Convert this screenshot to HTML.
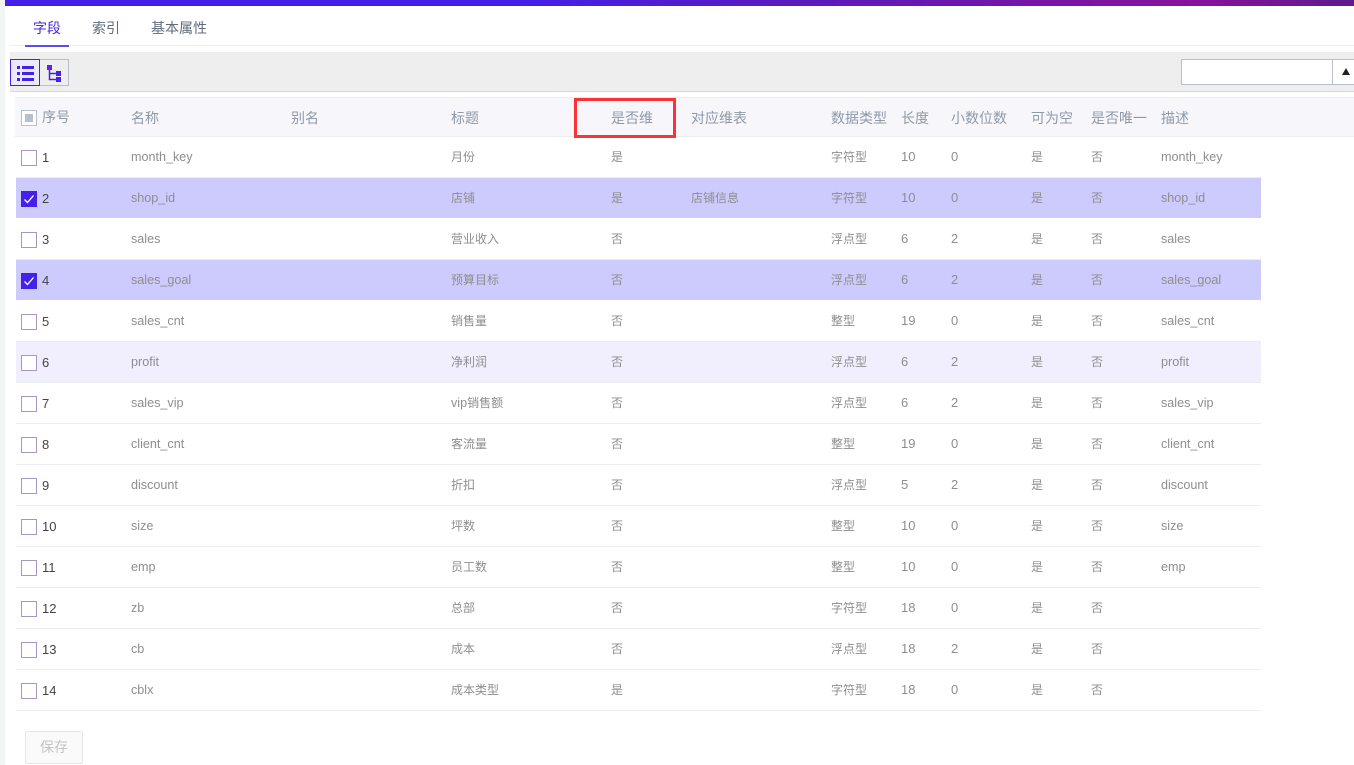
<!DOCTYPE html>
<html><head><meta charset="utf-8">
<style>
html,body{margin:0;padding:0;background:#fff;}
body{width:1354px;height:765px;position:relative;overflow:hidden;font-family:"Liberation Sans","Noto Sans CJK SC",sans-serif;font-size:14px;color:#8e8e8e;}
.abs{position:absolute;}
.row{position:absolute;left:16px;width:1245px;height:40px;border-bottom:1px solid #ebebf3;}
.row.s{background:#cdcbfd;border-bottom-color:#fff;}
.row.h{background:#f1effd;}
.row span{position:absolute;top:0;line-height:40px;white-space:nowrap;font-size:12px;}
.row .n{left:26px;top:1px;color:#444;font-size:13px;}
.c1{left:115px}.c2{left:275px}.c3{left:435px}.c4{left:595px}.c5{left:675px}.c6{left:815px}.c7{left:885px}.c8{left:935px}.c9{left:1015px}.c10{left:1075px}.c11{left:1145px}
.row .c1,.row .c11{font-size:12.6px;top:0;}
.row .c7,.row .c8{font-size:13px;top:0;}
b{font-weight:normal;font-size:12.6px;}
.row i{position:absolute;left:5px;top:13px;width:14px;height:14px;border:1px solid #a897c4;background:#fff;}
.row.s i{border-color:#4420e8;background:#4420e8;}
.row.s i svg{position:absolute;left:0;top:0;}
.hd span{position:absolute;top:97px;line-height:40px;color:#8f99a8;white-space:nowrap;}
.tab{position:absolute;top:18px;line-height:20px;font-size:14px;color:#5f6b7a;}
</style></head><body>
<div class="abs" style="left:0;top:0;width:5px;height:765px;background:#f3f5f5;"></div>
<div class="abs" style="left:5px;top:0;width:1349px;height:6px;background:linear-gradient(90deg,#4420e8 0%,#4420e8 38%,#5f1ab8 62%,#87129c 88%,#5e1a8c 100%);"></div>

<div class="tab" style="left:33px;color:#4a25e8;">字段</div>
<div class="tab" style="left:92px;">索引</div>
<div class="tab" style="left:151px;">基本属性</div>
<div class="abs" style="left:10px;top:45px;width:1344px;height:1px;background:#eeeeee;"></div>
<div class="abs" style="left:25px;top:45px;width:44px;height:2px;background:#5c4df0;"></div>

<div class="abs" style="left:10px;top:52px;width:1344px;height:39px;background:#eeeeee;border-bottom:1px solid #d8d8d8;"></div>
<div class="abs" style="left:10px;top:59px;width:28px;height:25px;border:1px solid #4420e8;background:#ece9fd;">
<svg width="28" height="25" style="display:block"><g fill="#4420e8"><rect x="6" y="6" width="3" height="3"/><rect x="11" y="6" width="12" height="3"/><rect x="6" y="12" width="3" height="3"/><rect x="11" y="12" width="12" height="3"/><rect x="6" y="18" width="3" height="3"/><rect x="11" y="18" width="12" height="3"/></g></svg>
</div>
<div class="abs" style="left:40px;top:59px;width:28px;height:25px;border:1px solid #b8bfcc;border-left:0;">
<svg width="28" height="25" style="display:block"><g fill="#4420e8"><rect x="7" y="5" width="5" height="5" fill="#6a1ee8"/><rect x="16" y="11" width="5" height="5"/><rect x="16" y="17" width="5" height="5"/></g><path d="M9.5 10V19.5H16M9.5 13.5H16" fill="none" stroke="#4420e8" stroke-width="1.5"/></svg>
</div>
<div class="abs" style="left:1181px;top:59px;width:150px;height:24px;border:1px solid #b8bfcc;background:#fff;"></div>
<div class="abs" style="left:1333px;top:59px;width:21px;height:24px;border-top:1px solid #b8bfcc;border-bottom:1px solid #b8bfcc;background:#fff;"></div>
<div class="abs" style="left:1342px;top:68px;width:0;height:0;border-left:4px solid transparent;border-right:4px solid transparent;border-bottom:7px solid #222;"></div>

<div class="abs" style="left:15px;top:97px;width:1339px;height:38px;background:#f7f7fb;border-top:1px solid #ecedf3;border-bottom:1px solid #ecedf3;"></div>
<div class="abs" style="left:21px;top:110px;width:14px;height:14px;border:1px solid #b8c0cc;background:#fff;"></div>
<div class="abs" style="left:25px;top:114px;width:8px;height:8px;background:#b8c0cc;"></div>
<div class="hd">
<span style="left:42px;top:97px;">序号</span><span style="left:131px;top:98px;">名称</span><span style="left:291px;top:98px;">别名</span><span style="left:451px;top:98px;">标题</span><span style="left:611px;top:98px;">是否维</span><span style="left:691px;top:98px;">对应维表</span><span style="left:831px;top:98px;">数据类型</span><span style="left:901px;top:98px;">长度</span><span style="left:951px;top:98px;">小数位数</span><span style="left:1031px;top:98px;">可为空</span><span style="left:1091px;top:98px;">是否唯一</span><span style="left:1161px;top:98px;">描述</span>
</div>
<div class="abs" style="left:574px;top:98px;width:96px;height:34px;border:3px solid #fb3237;"></div>

<div class="row" style="top:137px;"><i></i><span class="n">1</span><span class="c1">month_key</span><span class="c3">月份</span><span class="c4">是</span><span class="c6">字符型</span><span class="c7">10</span><span class="c8">0</span><span class="c9">是</span><span class="c10">否</span><span class="c11">month_key</span></div>
<div class="row s" style="top:178px;"><i><svg width="14" height="14"><path d="M2.5 7.5L5.5 10.5L11.5 3.5" fill="none" stroke="#fff" stroke-width="1.3"/></svg></i><span class="n">2</span><span class="c1">shop_id</span><span class="c3">店铺</span><span class="c4">是</span><span class="c5">店铺信息</span><span class="c6">字符型</span><span class="c7">10</span><span class="c8">0</span><span class="c9">是</span><span class="c10">否</span><span class="c11">shop_id</span></div>
<div class="row" style="top:219px;"><i></i><span class="n">3</span><span class="c1">sales</span><span class="c3">营业收入</span><span class="c4">否</span><span class="c6">浮点型</span><span class="c7">6</span><span class="c8">2</span><span class="c9">是</span><span class="c10">否</span><span class="c11">sales</span></div>
<div class="row s" style="top:260px;"><i><svg width="14" height="14"><path d="M2.5 7.5L5.5 10.5L11.5 3.5" fill="none" stroke="#fff" stroke-width="1.3"/></svg></i><span class="n">4</span><span class="c1">sales_goal</span><span class="c3">预算目标</span><span class="c4">否</span><span class="c6">浮点型</span><span class="c7">6</span><span class="c8">2</span><span class="c9">是</span><span class="c10">否</span><span class="c11">sales_goal</span></div>
<div class="row" style="top:301px;"><i></i><span class="n">5</span><span class="c1">sales_cnt</span><span class="c3">销售量</span><span class="c4">否</span><span class="c6">整型</span><span class="c7">19</span><span class="c8">0</span><span class="c9">是</span><span class="c10">否</span><span class="c11">sales_cnt</span></div>
<div class="row h" style="top:342px;"><i></i><span class="n">6</span><span class="c1">profit</span><span class="c3">净利润</span><span class="c4">否</span><span class="c6">浮点型</span><span class="c7">6</span><span class="c8">2</span><span class="c9">是</span><span class="c10">否</span><span class="c11">profit</span></div>
<div class="row" style="top:383px;"><i></i><span class="n">7</span><span class="c1">sales_vip</span><span class="c3"><b>vip</b>销售额</span><span class="c4">否</span><span class="c6">浮点型</span><span class="c7">6</span><span class="c8">2</span><span class="c9">是</span><span class="c10">否</span><span class="c11">sales_vip</span></div>
<div class="row" style="top:424px;"><i></i><span class="n">8</span><span class="c1">client_cnt</span><span class="c3">客流量</span><span class="c4">否</span><span class="c6">整型</span><span class="c7">19</span><span class="c8">0</span><span class="c9">是</span><span class="c10">否</span><span class="c11">client_cnt</span></div>
<div class="row" style="top:465px;"><i></i><span class="n">9</span><span class="c1">discount</span><span class="c3">折扣</span><span class="c4">否</span><span class="c6">浮点型</span><span class="c7">5</span><span class="c8">2</span><span class="c9">是</span><span class="c10">否</span><span class="c11">discount</span></div>
<div class="row" style="top:506px;"><i></i><span class="n">10</span><span class="c1">size</span><span class="c3">坪数</span><span class="c4">否</span><span class="c6">整型</span><span class="c7">10</span><span class="c8">0</span><span class="c9">是</span><span class="c10">否</span><span class="c11">size</span></div>
<div class="row" style="top:547px;"><i></i><span class="n">11</span><span class="c1">emp</span><span class="c3">员工数</span><span class="c4">否</span><span class="c6">整型</span><span class="c7">10</span><span class="c8">0</span><span class="c9">是</span><span class="c10">否</span><span class="c11">emp</span></div>
<div class="row" style="top:588px;"><i></i><span class="n">12</span><span class="c1">zb</span><span class="c3">总部</span><span class="c4">否</span><span class="c6">字符型</span><span class="c7">18</span><span class="c8">0</span><span class="c9">是</span><span class="c10">否</span></div>
<div class="row" style="top:629px;"><i></i><span class="n">13</span><span class="c1">cb</span><span class="c3">成本</span><span class="c4">否</span><span class="c6">浮点型</span><span class="c7">18</span><span class="c8">2</span><span class="c9">是</span><span class="c10">否</span></div>
<div class="row" style="top:670px;"><i></i><span class="n">14</span><span class="c1">cblx</span><span class="c3">成本类型</span><span class="c4">是</span><span class="c6">字符型</span><span class="c7">18</span><span class="c8">0</span><span class="c9">是</span><span class="c10">否</span></div>

<div class="abs" style="left:25px;top:731px;width:56px;height:31px;border:1px solid #e6e6e6;border-radius:2px;background:#fafafa;color:#c4c4c4;text-align:center;line-height:31px;font-size:14px;">保存</div>
</body></html>
